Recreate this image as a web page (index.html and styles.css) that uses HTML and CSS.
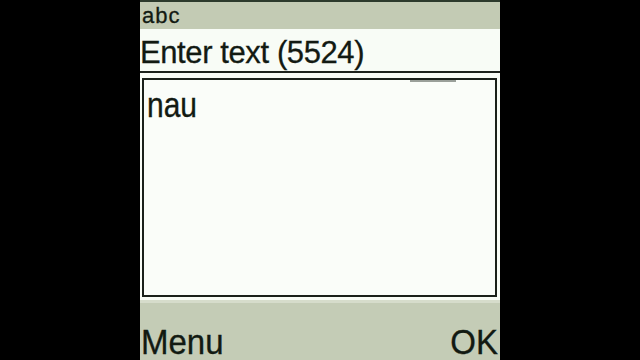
FILE: index.html
```html
<!DOCTYPE html>
<html>
<head>
<meta charset="utf-8">
<link rel="stylesheet" href="styles.css">
</head>
<body>
<div class="screen">
  <div class="edge"></div>
  <div class="indicator"><span class="mode">abc</span></div>
  <div class="title"><span class="title-text">Enter text (5524)</span></div>
  <div class="rule"></div>
  <div class="content">
    <div class="editor">
      <div class="scroll-mark"></div>
      <span class="entry">nau</span>
    </div>
  </div>
  <div class="softkeys">
    <span class="key">Menu</span>
    <span class="key">OK</span>
  </div>
</div>
</body>
</html>
```

FILE: styles.css
```css
html, body {
  margin: 0;
  padding: 0;
  background: #000;
  width: 640px;
  height: 360px;
  overflow: hidden;
}
body {
  display: flex;
  justify-content: center;
  font-family: "Liberation Sans", Arial, sans-serif;
  color: #121a12;
}
.screen {
  width: 360px;
  height: 360px;
  display: flex;
  flex-direction: column;
  background: #f8fcf6;
}
.edge {
  height: 2px;
  background: #2c3a2c;
}
.indicator {
  height: 27px;
  box-sizing: border-box;
  background: #c3cbb4;
  padding: 3px 0 0 2px;
}
.mode {
  display: inline-block;
  font-size: 22px;
  line-height: 22px;
  letter-spacing: 1px;
  -webkit-text-stroke: 0.3px #121a12;
}
.title {
  height: 42px;
  box-sizing: border-box;
  padding: 8px 0 0 0;
  background: #f8fcf6;
}
.title-text {
  display: inline-block;
  font-size: 31px;
  line-height: 31px;
  letter-spacing: -0.4px;
  -webkit-text-stroke: 0.3px #121a12;
}
.rule {
  height: 2px;
  background: #1c221c;
}
.content {
  height: 227px;
  box-sizing: border-box;
  padding: 5px 3px 3px 2px;
  background: #f8fcf6;
}
.editor {
  position: relative;
  height: 100%;
  box-sizing: border-box;
  border: 2px solid #1a201a;
  background: #fafdf9;
  padding: 12px 0 0 3px;
}
.scroll-mark {
  position: absolute;
  top: 0;
  left: 266px;
  width: 46px;
  height: 2px;
  background: #9aa09a;
}
.entry {
  display: inline-block;
  font-size: 30px;
  line-height: 30px;
  transform: scaleY(1.15);
  transform-origin: 0 25px;
  -webkit-text-stroke: 0.3px #121a12;
}
.softkeys {
  flex: 1;
  box-sizing: border-box;
  background: #c4ccb6;
  border-top: 3px solid #d6dccb;
  padding: 26px 2px 0 1px;
  display: flex;
  justify-content: space-between;
  align-items: flex-start;
}
.key {
  display: inline-block;
  font-size: 33px;
  line-height: 28px;
  transform: scaleY(1.05);
  transform-origin: 0 25px;
  -webkit-text-stroke: 0.3px #121a12;
}
```
